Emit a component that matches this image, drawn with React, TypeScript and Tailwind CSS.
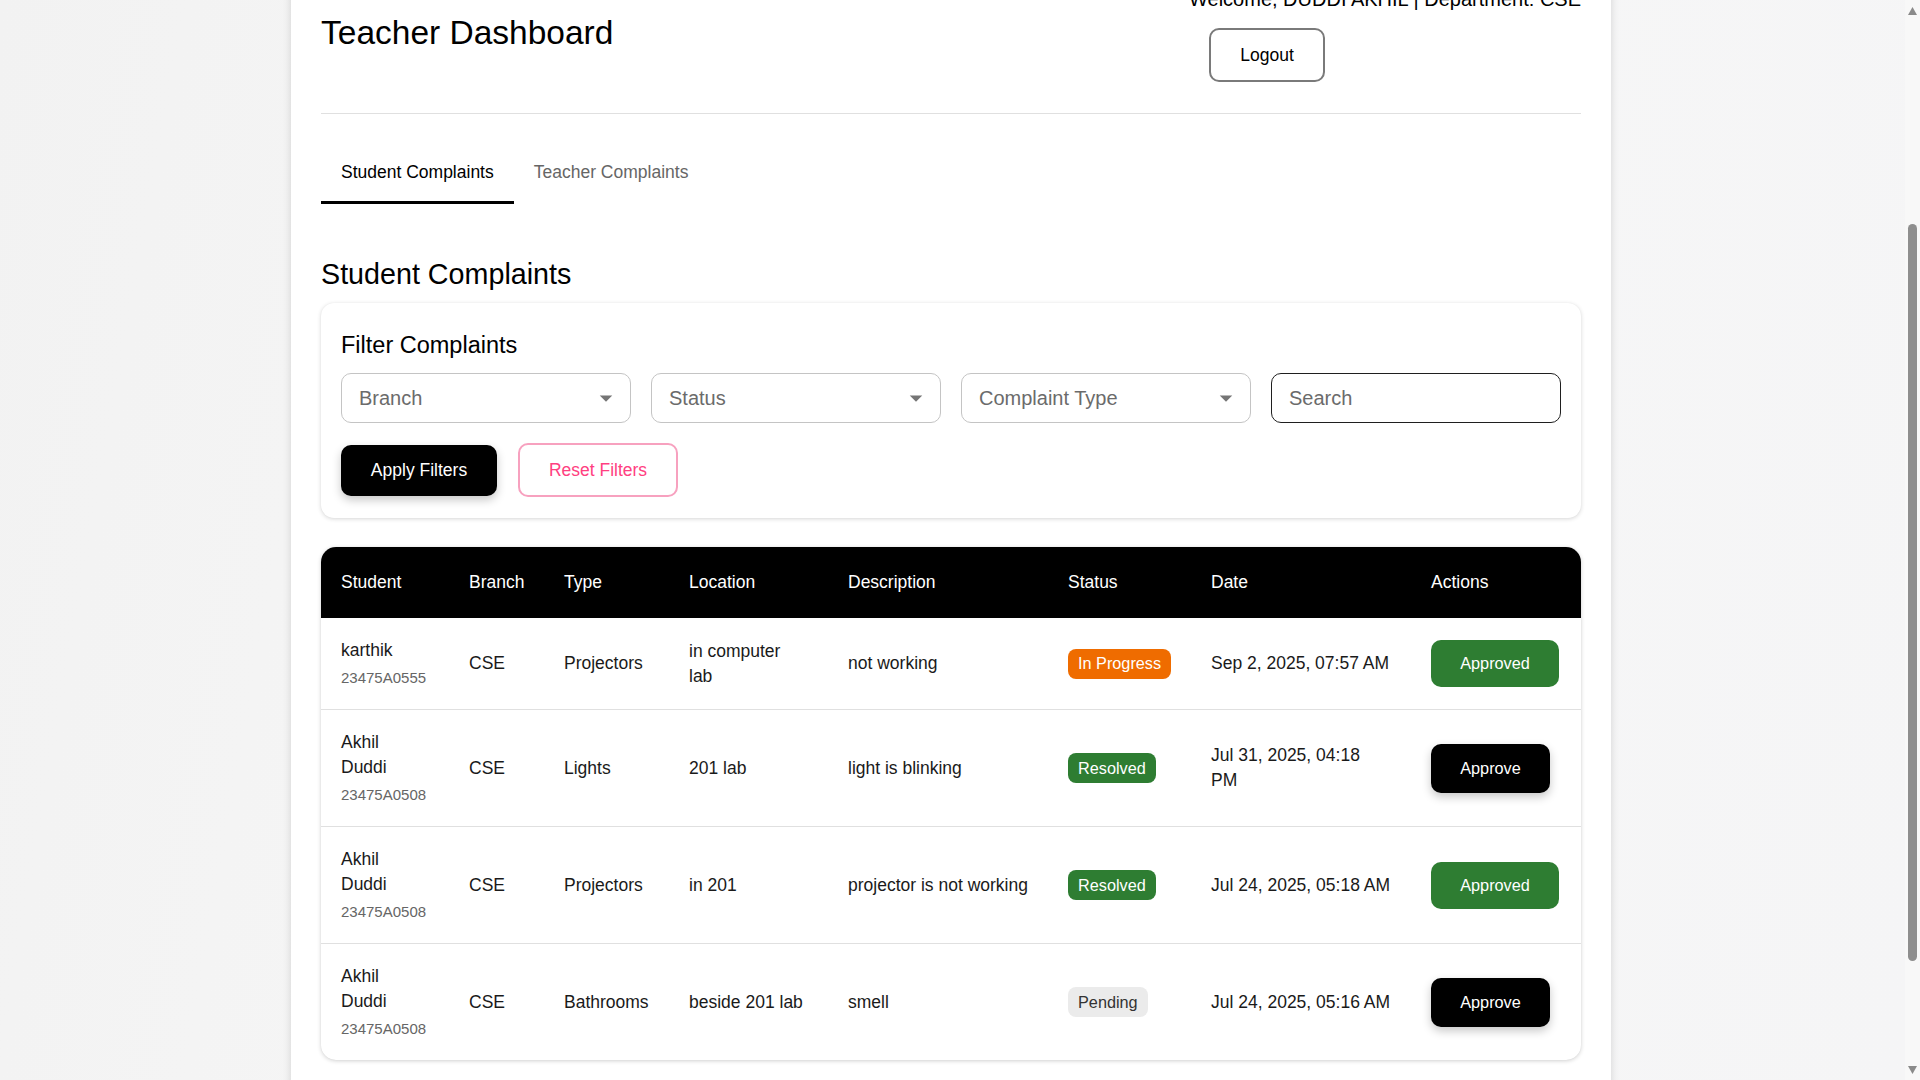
import { useLayoutEffect, useRef } from "react";

type Status = "In Progress" | "Resolved" | "Pending";

const complaints: {
  name: string;
  roll: string;
  branch: string;
  type: string;
  location: string;
  description: string;
  status: Status;
  date: string;
  approved: boolean;
}[] = [
  {
    name: "karthik",
    roll: "23475A0555",
    branch: "CSE",
    type: "Projectors",
    location: "in computer lab",
    description: "not working",
    status: "In Progress",
    date: "Sep 2, 2025, 07:57 AM",
    approved: true,
  },
  {
    name: "Akhil Duddi",
    roll: "23475A0508",
    branch: "CSE",
    type: "Lights",
    location: "201 lab",
    description: "light is blinking",
    status: "Resolved",
    date: "Jul 31, 2025, 04:18\nPM",
    approved: false,
  },
  {
    name: "Akhil Duddi",
    roll: "23475A0508",
    branch: "CSE",
    type: "Projectors",
    location: "in 201",
    description: "projector is not working",
    status: "Resolved",
    date: "Jul 24, 2025, 05:18 AM",
    approved: true,
  },
  {
    name: "Akhil Duddi",
    roll: "23475A0508",
    branch: "CSE",
    type: "Bathrooms",
    location: "beside 201 lab",
    description: "smell",
    status: "Pending",
    date: "Jul 24, 2025, 05:16 AM",
    approved: false,
  },
];

const statusStyles: Record<Status, string> = {
  "In Progress": "bg-[#ef6c00] text-white",
  Resolved: "bg-[#2e7d32] text-white",
  Pending: "bg-[#ebebeb] text-[#333333]",
};

function SelectBox({ label }: { label: string }) {
  return (
    <div className="h-[50px] flex items-center justify-between pl-[17px] pr-[9px] rounded-[10px] border border-[#c4c4c4] bg-white">
      <span className="text-[20px] text-[#6b6b6b]">{label}</span>
      <svg width="30" height="30" viewBox="0 0 24 24" fill="#757575">
        <path d="M7 10l5 5 5-5z" />
      </svg>
    </div>
  );
}

function StatusBadge({ status }: { status: Status }) {
  return (
    <span
      className={`inline-flex items-center whitespace-nowrap h-[30px] px-[10px] rounded-[8px] text-[16.25px] ${statusStyles[status]}`}
    >
      {status}
    </span>
  );
}

// page scrollbar as it shows in the screenshot
function ScrollBar() {
  return (
    <div className="w-[15px] shrink-0 flex flex-col items-center bg-[#f8f8f8]">
      <svg className="mt-[7px]" width="9" height="8" viewBox="0 0 9 8" fill="#8a8a8a">
        <path d="M4.5 0L9 8H0z" />
      </svg>
      <div className="flex-1 w-full flex flex-col items-center">
        <div className="mt-[209px] h-[737px] w-[9px] rounded-full bg-[#8e8e8e]" />
      </div>
      <svg className="mb-[6px]" width="9" height="8" viewBox="0 0 9 8" fill="#8a8a8a">
        <path d="M0 0H9L4.5 8z" />
      </svg>
    </div>
  );
}

export default function App() {
  const scroller = useRef<HTMLDivElement>(null);

  useLayoutEffect(() => {
    if (scroller.current) scroller.current.scrollTop = 306;
  }, []);

  return (
    <div className="h-screen flex font-['Liberation_Sans',Arial,sans-serif] text-[#1a1a1a]">
      <div
        ref={scroller}
        className="flex-1 overflow-hidden bg-[linear-gradient(100deg,#f2f2f2_0%,#f7f7f7_45%,#f5f5f6_100%)]"
      >
        <div className="pt-[260px] pb-[131px]">
          <main className="ml-[291px] w-[1320px] bg-white px-[30px] pt-[30px] pb-[40px] shadow-[0_0_8px_rgba(0,0,0,0.14)]">
            {/* header */}
            <header className="flex items-center justify-between pb-[31px] border-b border-[#e0e0e0]">
              <h1 className="text-[33.5px] leading-[40px] text-black">Teacher Dashboard</h1>
              <div className="flex flex-col items-start">
                <p className="text-[20px] leading-[30px] text-black">
                  Welcome, DUDDI AKHIL | Department: CSE
                </p>
                <button className="mt-[14px] ml-[20px] h-[54px] w-[116px] rounded-[10px] border-2 border-[#7a7a7a] text-[17.5px] text-black">
                  Logout
                </button>
              </div>
            </header>

            {/* tabs */}
            <div className="mt-[30px] flex">
              <button className="h-[60px] px-[20px] border-b-[3px] border-black text-[17.5px] text-black">
                Student Complaints
              </button>
              <button className="h-[60px] px-[20px] border-b-[3px] border-transparent text-[17.5px] text-[#666666]">
                Teacher Complaints
              </button>
            </div>

            <h2 className="mt-[53px] mb-[12px] text-[28.7px] leading-[34px] text-black">Student Complaints</h2>

            {/* filters */}
            <section className="rounded-[13px] bg-white px-[20px] pt-[26px] pb-[21px] shadow-[0_1px_4px_rgba(0,0,0,0.16),0_0_1px_rgba(0,0,0,0.06)]">
              <h3 className="text-[23.5px] leading-[32px] text-black">Filter Complaints</h3>
              <div className="mt-[12px] grid grid-cols-4 gap-[20px]">
                <SelectBox label="Branch" />
                <SelectBox label="Status" />
                <SelectBox label="Complaint Type" />
                <div className="h-[50px] flex items-center pl-[17px] rounded-[10px] border border-[#1f1f1f] bg-white">
                  <span className="text-[20px] text-[#6b6b6b]">Search</span>
                </div>
              </div>
              <div className="mt-[20px] flex items-center gap-[21px]">
                <button className="h-[51px] w-[156px] rounded-[10px] bg-black text-[17.5px] font-medium text-white shadow-[0_4px_10px_rgba(0,0,0,0.22)]">
                  Apply Filters
                </button>
                <button className="h-[54px] w-[160px] rounded-[10px] border-2 border-[#f7a1bf] text-[17.5px] text-[#ff4081]">
                  Reset Filters
                </button>
              </div>
            </section>

            {/* complaints table */}
            <section className="mt-[29px] rounded-[15px] overflow-hidden bg-white shadow-[0_1px_4px_rgba(0,0,0,0.18),0_0_1px_rgba(0,0,0,0.08)]">
              <table className="w-full table-fixed text-left text-[17.5px] leading-[25px]">
                <thead className="bg-black text-white">
                  <tr>
                    <th className="w-[128px] px-[20px] py-[23px] font-medium">Student</th>
                    <th className="w-[95px] px-[20px] py-[23px] font-medium">Branch</th>
                    <th className="w-[125px] px-[20px] py-[23px] font-medium">Type</th>
                    <th className="w-[159px] px-[20px] py-[23px] font-medium">Location</th>
                    <th className="w-[220px] px-[20px] py-[23px] font-medium">Description</th>
                    <th className="w-[143px] px-[20px] py-[23px] font-medium">Status</th>
                    <th className="w-[220px] px-[20px] py-[23px] font-medium">Date</th>
                    <th className="w-[170px] px-[20px] py-[23px] font-medium">Actions</th>
                  </tr>
                </thead>
                <tbody>
                  {complaints.map((c, i) => (
                    <tr
                      key={i}
                      className={i < complaints.length - 1 ? "border-b border-[#e0e0e0]" : ""}
                    >
                      <td className="px-[20px] pt-[20px] pb-[21px] align-middle">
                        <div className="max-w-[80px]">{c.name}</div>
                        <div className="mt-[4px] text-[15px] leading-[21px] text-[#666666]">{c.roll}</div>
                      </td>
                      <td className="px-[20px] align-middle">{c.branch}</td>
                      <td className="px-[20px] align-middle">{c.type}</td>
                      <td className="px-[20px] align-middle">
                        <div className="max-w-[116px]">{c.location}</div>
                      </td>
                      <td className="px-[20px] align-middle whitespace-nowrap">{c.description}</td>
                      <td className="px-[20px] align-middle">
                        <StatusBadge status={c.status} />
                      </td>
                      <td className="px-[20px] align-middle whitespace-pre">{c.date}</td>
                      <td className="px-[20px] align-middle">
                        {c.approved ? (
                          <button className="h-[47px] w-[128px] rounded-[10px] bg-[#2e7d32] text-[16.25px] text-white">
                            Approved
                          </button>
                        ) : (
                          <button className="h-[49px] w-[119px] rounded-[10px] bg-black text-[16.25px] text-white shadow-[0_4px_10px_rgba(0,0,0,0.22)]">
                            Approve
                          </button>
                        )}
                      </td>
                    </tr>
                  ))}
                </tbody>
              </table>
            </section>
          </main>
        </div>
      </div>
      <ScrollBar />
    </div>
  );
}
